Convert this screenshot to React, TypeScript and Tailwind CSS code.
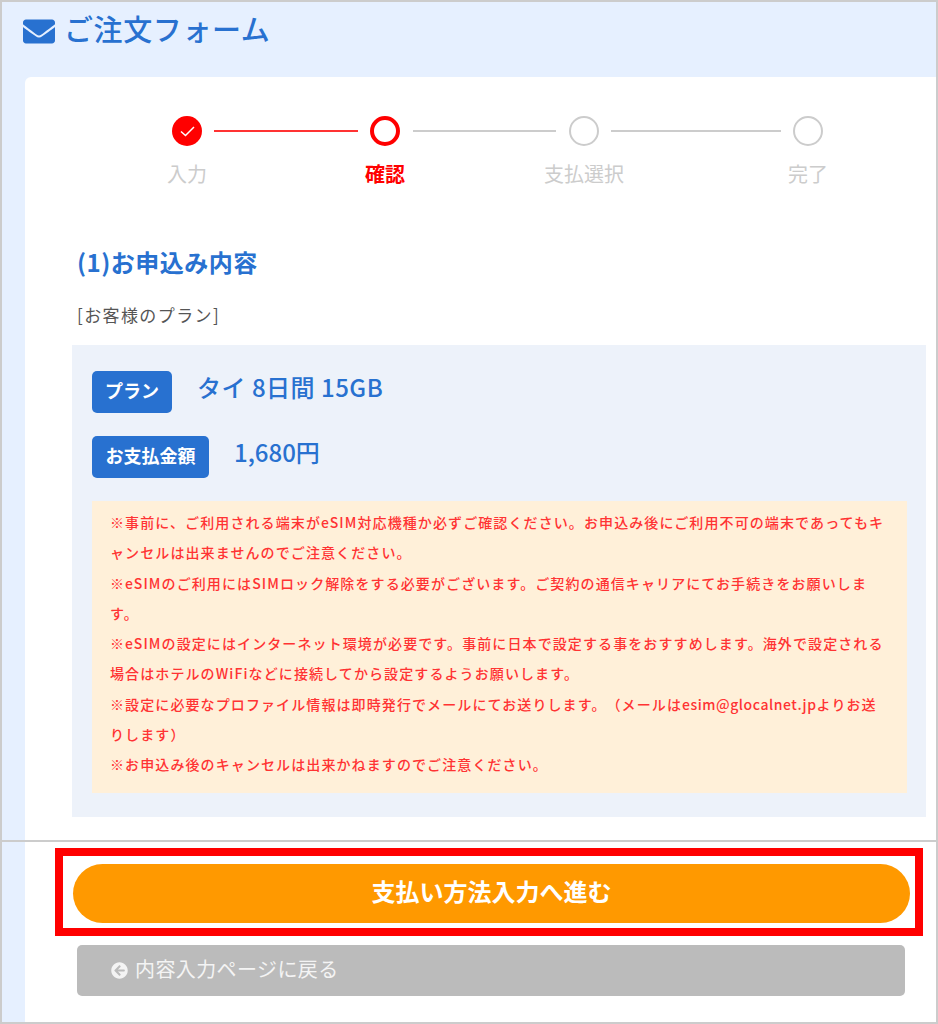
// App.tsx
import React from 'react';
import { FaEnvelope, FaArrowCircleLeft } from 'react-icons/fa';

const jp = { fontFamily: '"Noto Sans CJK JP", "Noto Sans", sans-serif' };

const noteLines: React.ReactNode[] = [
  '※事前に、ご利用される端末がeSIM対応機種か必ずご確認ください。お申込み後にご利用不可の端末であってもキ',
  'ャンセルは出来ませんのでご注意ください。',
  '※eSIMのご利用にはSIMロック解除をする必要がございます。ご契約の通信キャリアにてお手続きをお願いしま',
  'す。',
  '※eSIMの設定にはインターネット環境が必要です。事前に日本で設定する事をおすすめします。海外で設定される',
  '場合はホテルのWiFiなどに接続してから設定するようお願いします。',
  <>
    ※設定に必要なプロファイル情報は即時発行でメールにてお送りします。（メールは
    <span className="tracking-[0.55px]">esim@glocalnet.jp</span>
    よりお送
  </>,
  'りします）',
  '※お申込み後のキャンセルは出来かねますのでご注意ください。',
];

function Step({ label, state }: { label: string; state: 'done' | 'current' | 'todo' }) {
  return (
    <div className="flex w-[30px] shrink-0 flex-col items-center">
      {state === 'done' && (
        <div className="flex h-[30px] w-[30px] items-center justify-center rounded-full bg-[#ff0000]">
          <svg width="15" height="11" viewBox="0 0 15 11" fill="none" stroke="#ffffff" strokeWidth="1.5">
            <path d="M1 5.5 L5.5 9.5 L14 1" />
          </svg>
        </div>
      )}
      {state === 'current' && <div className="h-[30px] w-[30px] rounded-full border-[4px] border-[#ff0000] bg-white" />}
      {state === 'todo' && <div className="h-[30px] w-[30px] rounded-full border-2 border-[#cccccc] bg-white" />}
      <div
        className={`mt-[13px] whitespace-nowrap text-[20px] leading-[30px] ${
          state === 'current' ? 'font-bold text-[#ff0000]' : 'text-[#cccccc]'
        }`}
      >
        {label}
      </div>
    </div>
  );
}

function Line({ width, red }: { width: string; red?: boolean }) {
  return <div className={`mx-[12px] mt-[14px] h-[2px] ${width} shrink-0 ${red ? 'bg-[#ff3333]' : 'bg-[#cccccc]'}`} />;
}

export default function App() {
  return (
    <div className="h-[1024px] w-[938px] overflow-hidden border-2 border-[#cccccc] bg-[#e6f0ff]" style={jp}>
      <div className="flex h-[75px] items-start gap-[9px] pl-[21px] pt-[7px]">
        <FaEnvelope className="mt-[6px] h-[33px] w-[32px] text-[#2871d0]" />
        <h1 className="text-[29px] font-medium leading-[38px] tracking-[0.6px] text-[#2871d0]">ご注文フォーム</h1>
      </div>

      <div className="ml-[23px] h-[763px] rounded-tl-[6px] bg-white pl-[47px] pt-[39px]">
        <div className="flex items-start pl-[100px]">
          <Step label="入力" state="done" />
          <Line width="w-[144px]" red />
          <Step label="確認" state="current" />
          <div className="w-px shrink-0" />
          <Line width="w-[143px]" />
          <div className="w-px shrink-0" />
          <Step label="支払選択" state="todo" />
          <Line width="w-[170px]" />
          <Step label="完了" state="todo" />
        </div>

        <h2 className="ml-[5px] mt-[56px] text-[24px] font-bold leading-[34px] tracking-[0.5px] text-[#2871d0]">(1)お申込み内容</h2>
        <p className="ml-[5px] mt-[24px] text-[17px] leading-[24px] tracking-[1.4px] text-[#555555]">[お客様のプラン]</p>

        <div className="mt-[18px] h-[472px] w-[854px] bg-[#edf2fa] pl-[20px] pt-[26px]">
          <div className="flex items-center">
            <span className="flex h-[42px] w-[80px] items-center justify-center rounded-[5px] bg-[#2871d0] pb-[4px] text-[18px] font-bold text-white">
              プラン
            </span>
            <span className="ml-[25px] mt-[-10px] text-[24px] font-medium tracking-[0.5px] text-[#2871d0]">タイ 8日間 15GB</span>
          </div>
          <div className="mt-[23px] flex items-center">
            <span className="flex h-[42px] w-[117px] items-center justify-center rounded-[5px] bg-[#2871d0] pb-[4px] text-[18px] font-bold text-white">
              お支払金額
            </span>
            <span className="ml-[25px] mt-[-10px] text-[24px] font-medium text-[#2871d0]">1,680円</span>
          </div>
          <div className="mt-[23px] h-[292px] w-[815px] bg-[#fff0d9] pl-[18px] pt-[6px] text-[14px] font-medium leading-[30.25px] tracking-[1.1px] text-[#ff3333] [text-spacing-trim:space-all]">
            {noteLines.map((line, i) => (
              <div key={i} className="whitespace-nowrap">
                {line}
              </div>
            ))}
          </div>
        </div>
      </div>

      <div className="h-[182px] border-t-2 border-[#cccccc] bg-[linear-gradient(to_right,#e6f0ff_23px,#ffffff_23px)] pl-[53px] pt-[6px]">
        <div className="h-[88px] w-[868px] border-[8px] border-[#ff0000] bg-white pl-[10px] pt-[8px]">
          <button className="flex h-[59px] w-[837px] items-center justify-center rounded-full bg-[#ff9900] pb-[5px] text-[24px] font-bold text-white">
            支払い方法入力へ進む
          </button>
        </div>
        <button className="ml-[22px] mt-[9px] flex h-[51px] w-[828px] items-center gap-[7px] rounded-[5px] bg-[#bbbbbb] pl-[34px] text-[20px] tracking-[0.4px] text-[#f4f4f4]">
          <FaArrowCircleLeft className="h-[17px] w-[17px]" />
          <span className="mb-[4px]">内容入力ページに戻る</span>
        </button>
      </div>
    </div>
  );
}
